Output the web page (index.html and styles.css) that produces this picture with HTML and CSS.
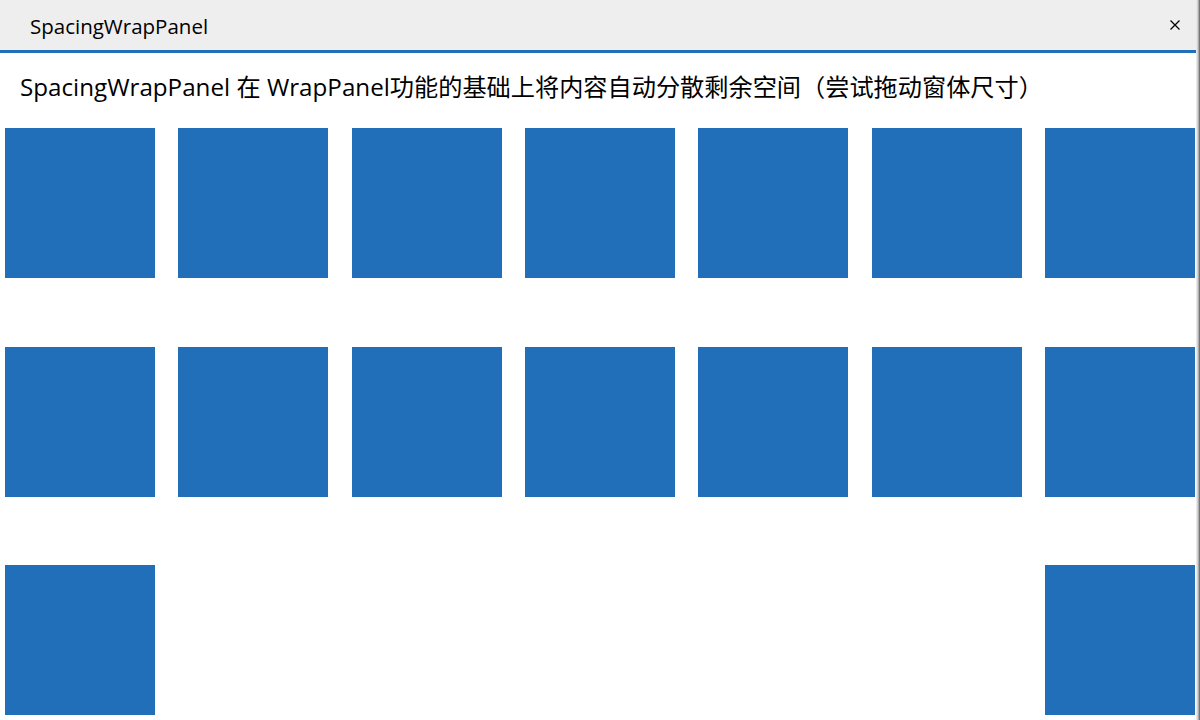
FILE: index.html
```html
<!DOCTYPE html>
<html lang="zh-CN">
<head>
<meta charset="utf-8">
<title>SpacingWrapPanel</title>
<link rel="stylesheet" href="styles.css">
</head>
<body>
<div class="frame">
  <div class="client">
    <header class="titlebar">
      <span class="title">SpacingWrapPanel</span>
      <button class="close" aria-label="关闭">
        <svg width="10" height="10" viewBox="0 0 10 10"><path d="M0.5 0.5 L9.5 9.5 M9.5 0.5 L0.5 9.5" stroke="#000" stroke-width="1.3" fill="none"/></svg>
      </button>
    </header>
    <main class="content">
      <h1 class="heading">SpacingWrapPanel 在 WrapPanel功能的基础上将内容自动分散剩余空间（尝试拖动窗体尺寸）</h1>
      <div class="wrap">
        <div class="tile"></div><div class="tile"></div><div class="tile"></div><div class="tile"></div><div class="tile"></div><div class="tile"></div><div class="tile"></div>
        <div class="tile"></div><div class="tile"></div><div class="tile"></div><div class="tile"></div><div class="tile"></div><div class="tile"></div><div class="tile"></div>
        <div class="tile"></div><div class="tile"></div>
      </div>
    </main>
  </div>
  <div class="edge"></div>
</div>
</body>
</html>
```

FILE: styles.css
```css
html, body {
  margin: 0;
  padding: 0;
  background: #ffffff;
  overflow: hidden;
}
body {
  width: 1200px;
  height: 720px;
  font-family: "Open Sans", "Noto Sans CJK SC", sans-serif;
  color: #000;
}
.frame {
  display: flex;
  width: 1200px;
  height: 720px;
}
.client {
  flex: 1;
  display: flex;
  flex-direction: column;
  min-width: 0;
}
.edge {
  width: 4px;
  background: linear-gradient(to right, #f4f4f4, #c8c8c8 50%, #5a5a5a);
}
.titlebar {
  height: 50px;
  background: #eeeeee;
  border-bottom: 3px solid #216fb8;
  display: flex;
  align-items: center;
  justify-content: space-between;
  padding-left: 30px;
  box-sizing: content-box;
}
.title {
  font-size: 20.5px;
  padding-top: 1px;
}
.close {
  border: 0;
  background: transparent;
  width: 42px;
  height: 50px;
  display: flex;
  align-items: center;
  justify-content: center;
  padding: 0;
  margin-right: 0;
}
.content {
  flex: 1;
  display: flex;
  flex-direction: column;
}
.heading {
  margin: 18px 0 0 20px;
  font-size: 24.2px;
  font-weight: normal;
  line-height: 32px;
  height: 32px;
  white-space: nowrap;
}
.wrap {
  margin-top: 25px;
  padding: 0 1px 0 5px;
  display: flex;
  flex-wrap: wrap;
  justify-content: space-between;
  row-gap: 68.5px;
}
.tile {
  width: 150px;
  height: 150px;
  background: #216fb8;
}
```
